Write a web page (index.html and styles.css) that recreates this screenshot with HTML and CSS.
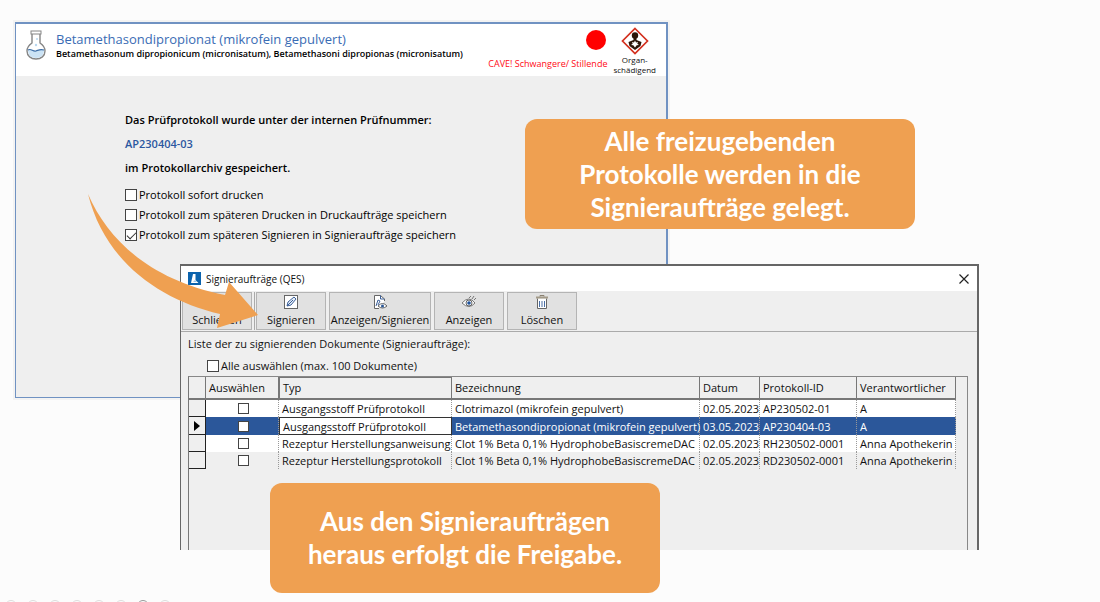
FILE: index.html
```
<!DOCTYPE html>
<html lang="de">
<head>
	<meta charset="utf-8">
	<title>Signieraufträge</title>
	<link rel="stylesheet" href="styles.css">
</head>
<body>
<main class="slide">

  <section class="window protocol">
    <header class="substance">
      <svg class="flask" viewBox="0 0 20 30" width="20" height="30">
        <path d="M6 4v9C3 15 1 18 1 21c0 5 4 8 9 8s9-3 9-8c0-3-2-6-5-8V4" fill="#fff" stroke="#858585" stroke-width="1.4"/>
        <path d="M2 20c3-2 5 2 8 1s4-2 8-1c0 5-3 8-8 8s-8-3-8-8z" fill="#cbe3f5"/>
        <path d="M2 20c3-2 5 2 8 1s4-2 8-1" fill="none" stroke="#3c6ea8" stroke-width="1.2"/>
        <rect x="5" y="1" width="10" height="3" fill="#fff" stroke="#858585"/>
        <circle cx="10" cy="15" r="1.2" fill="#b9d8f0"/>
        <circle cx="11" cy="9" r="1" fill="#b9d8f0"/>
      </svg>
      <div class="names">
        <h1>Betamethasondipropionat (mikrofein gepulvert)</h1>
        <p>Betamethasonum dipropionicum (micronisatum), Betamethasoni dipropionas (micronisatum)</p>
      </div>
      <div class="cave">
        <span class="cave-dot"></span>
        <span>CAVE! Schwangere/ Stillende</span>
      </div>
      <div class="hazard">
        <svg viewBox="0 0 28 28" width="28" height="28">
          <path d="M14 1.5 26.500 14 14 26.500 1.500 14z" fill="#fff" stroke="#d3301f" stroke-width="1.700"/>
          <circle cx="14" cy="8.500" r="3.200" fill="#2b1408"/>
          <path d="M12.500 10h3v3l5 2-1 4-5.500 4-5.500-4-1-4 5-2z" fill="#2b1408"/>
          <path d="M14 13.500l1 2 2-.5-.7 1.800 1.700 1.200-2.300.3L14 20.500l-1.700-2.200-2.300-.3 1.700-1.200L11 15l2 .5z" fill="#fff"/>
        </svg>
        <span>Organ-<br>schädigend</span>
      </div>
    </header>
    <div class="result">
      <p>Das Prüfprotokoll wurde unter der internen Prüfnummer:</p>
      <p class="number">AP230404-03</p>
      <p>im Protokollarchiv gespeichert.</p>
      <div class="options">
        <label><input type="checkbox">Protokoll sofort drucken</label>
        <label><input type="checkbox">Protokoll zum späteren Drucken in Druckaufträge speichern</label>
        <label><input type="checkbox" checked>Protokoll zum späteren Signieren in Signieraufträge speichern</label>
      </div>
    </div>
  </section>

  <section class="window orders">
    <header class="titlebar">
      <svg viewBox="0 0 13 13" width="13" height="13">
        <rect width="13" height="13" fill="#0b63ad"/>
        <path d="M5 2h2.500v6l3 3H3z" fill="#fff"/>
        <path d="M7 8l2 2H5z" fill="#9cc9ea"/>
      </svg>
      <h2>Signieraufträge (QES)</h2>
      <button class="close" aria-label="Fenster schließen">
        <svg viewBox="0 0 10 10" width="10" height="10"><path d="M.5.5l9 9M9.500.5l-9 9" stroke="#222" stroke-width="1.200"/></svg>
      </button>
    </header>
    <div class="toolbar">
      <button class="tool">Schließen</button>
      <span class="divider"></span>
      <button class="tool">
        <svg viewBox="0 0 16 16" width="16" height="16" fill="none">
          <rect x="1.500" y="1.500" width="13" height="13" fill="#fff" stroke="#666"/>
          <path d="M4 12l1-4 6-5 2 2-5 6z" fill="#e6eef8" stroke="#3b5f98"/>
          <path d="M4 12l6-6" stroke="#3b5f98"/>
        </svg>
        Signieren
      </button>
      <button class="tool wide">
        <svg viewBox="0 0 16 16" width="16" height="16" fill="none">
          <path d="M12.500 7V5l-4-3.500h-6v13H7" fill="#fff" stroke="#666"/>
          <path d="M8.500 1.500V5h4M4 12l2-6 2 1-2 4" stroke="#3b5f98"/>
          <path d="M6 12q4.500-5 9 0-4.500 4-9 0z" fill="#fff" stroke="#666"/>
          <circle cx="10.500" cy="12" r="1.500" fill="#2b5797"/>
        </svg>
        Anzeigen/Signieren
      </button>
      <button class="tool">
        <svg viewBox="0 0 16 16" width="16" height="16" fill="none">
          <path d="M1 9q7-8 13 0-6 7-13 0z" fill="#fff" stroke="#777"/>
          <path d="M8 4l2-2M11 5l2-3M13 6l2-2" stroke="#777"/>
          <circle cx="8" cy="9" r="3" stroke="#666"/>
          <circle cx="8" cy="9" r="1.800" fill="#1e529c"/>
        </svg>
        Anzeigen
      </button>
      <button class="tool">
        <svg viewBox="0 0 16 16" width="16" height="16" fill="none">
          <path d="M3.500 4.500v10h9v-10" fill="#fff" stroke="#666"/>
          <path d="M2 3.500h12" stroke="#a39a88" stroke-width="2"/>
          <path d="M6 2.500v-1h4v1" stroke="#8a8070"/>
          <path d="M5.500 7v6M8 7v6M10.500 7v6" stroke="#4a6fa5"/>
        </svg>
        Löschen
      </button>
    </div>
    <div class="list">
      <p>Liste der zu signierenden Dokumente (Signieraufträge):</p>
      <label class="all"><input type="checkbox">Alle auswählen (max. 100 Dokumente)</label>
      <div class="grid">
        <table>
          <colgroup>
            <col class="c-mark"><col class="c-check"><col class="c-type"><col class="c-name"><col class="c-date"><col class="c-id"><col class="c-person">
          </colgroup>
          <thead>
            <tr><th></th><th>Auswählen</th><th class="sorted">Typ</th><th>Bezeichnung</th><th>Datum</th><th>Protokoll-ID</th><th>Verantwortlicher</th></tr>
          </thead>
          <tbody>
            <tr>
              <td></td><td><input type="checkbox" aria-label="AP230502-01 auswählen"></td>
              <td>Ausgangsstoff Prüfprotokoll</td><td>Clotrimazol (mikrofein gepulvert)</td><td>02.05.2023</td><td>AP230502-01</td><td>A</td>
            </tr>
            <tr class="selected">
              <td><svg viewBox="0 0 6 10" width="6" height="10"><path d="M0 0l6 5-6 5z" fill="#000"/></svg></td><td><input type="checkbox" aria-label="AP230404-03 auswählen"></td>
              <td class="focus">Ausgangsstoff Prüfprotokoll</td><td>Betamethasondipropionat (mikrofein gepulvert)</td><td>03.05.2023</td><td>AP230404-03</td><td>A</td>
            </tr>
            <tr>
              <td></td><td><input type="checkbox" aria-label="RH230502-0001 auswählen"></td>
              <td>Rezeptur Herstellungsanweisung</td><td>Clot 1% Beta 0,1% HydrophobeBasiscremeDAC</td><td>02.05.2023</td><td>RH230502-0001</td><td>Anna Apothekerin</td>
            </tr>
            <tr class="odd">
              <td></td><td><input type="checkbox" aria-label="RD230502-0001 auswählen"></td>
              <td>Rezeptur Herstellungsprotokoll</td><td>Clot 1% Beta 0,1% HydrophobeBasiscremeDAC</td><td>02.05.2023</td><td>RD230502-0001</td><td>Anna Apothekerin</td>
            </tr>
          </tbody>
        </table>
      </div>
    </div>
  </section>

  <svg class="arrow" viewBox="0 0 172 136" width="172" height="136">
    <path d="M1 1C21 47 63 87 138 102L142 89 171 122 130 135 133 121C73 107 18 69 1 1z" fill="#efa051"/>
  </svg>

  <p class="callout callout-top">Alle freizugebenden<br>Protokolle werden in die<br>Signieraufträge gelegt.</p>
  <p class="callout callout-bottom">Aus den Signieraufträgen<br>heraus erfolgt die Freigabe.</p>

  <div class="dots">
    <span></span><span></span><span></span><span></span><span></span><span></span><span class="current"></span><span></span>
  </div>
</main>
</body>
</html>
```

FILE: styles.css
```
* {
    box-sizing: border-box;
}

body {
    margin: 0;
    background: #fcfcfc;
    color: #111;
    font: 11px/16px "Open Sans", "Noto Sans", sans-serif;
}

h1, h2, p {
    margin: 0;
    font-size: inherit;
    font-weight: inherit;
}

button {
    font: inherit;
    color: inherit;
}

svg {
    display: block;
    flex: none;
}

input[type="checkbox"] {
    appearance: none;
    flex: none;
    width: 12px;
    height: 12px;
    margin: 0;
    background: #fff;
    border: 1px solid #444;
}

input[type="checkbox"]:checked::before {
    content: "";
    display: block;
    width: 8px;
    height: 4px;
    margin: 2px 1px;
    border: solid #333;
    border-width: 0 0 1px 1px;
    transform: rotate(-45deg);
}

label {
    display: flex;
    align-items: center;
    gap: 2px;
}

.slide {
    position: relative;
    min-height: 100vh;
    overflow: hidden;
}

.window {
    position: absolute;
    background: #efefef;
}

/* protocol window */
.protocol {
    left: 15px;
    top: 22px;
    width: 653px;
    min-height: 376px;
    border: 2px solid #7092c2;
    border-width: 2px 2px 1px 1px;
    box-shadow: 0 0 0 2px #f3f3f3;
}

.substance {
    display: flex;
    align-items: flex-start;
    height: 52px;
    padding: 6px 10px 0;
    background: #fff;
}

.names {
    flex: 1;
    padding: 1px 0 0 10px;
    white-space: nowrap;
}

.names h1 {
    color: #3a6cb4;
    font-size: 13px;
}

.names p {
    color: #000;
    font-size: 9px;
    font-weight: 600;
    line-height: 13px;
}

.cave {
    display: flex;
    flex-direction: column;
    align-items: flex-end;
    gap: 6px;
    color: #ff0a14;
    font-size: 9px;
    white-space: nowrap;
}

.cave-dot {
    width: 20px;
    height: 20px;
    margin-right: 1px;
    border-radius: 50%;
    background: #f00;
}

.hazard {
    display: flex;
    flex-direction: column;
    align-items: center;
    margin: -3px 0 0 6px;
    font-size: 8px;
    line-height: 10px;
    text-align: center;
}

.result {
    padding: 36px 0 0 109px;
    font-weight: 600;
    color: #000;
}

.result p {
    margin-bottom: 8px;
}

.result .number {
    color: #2b57a0;
}

.options {
    display: flex;
    flex-direction: column;
    gap: 4px;
    padding-top: 3px;
    font-weight: normal;
}

/* signing orders window */
.orders {
    left: 180px;
    top: 264px;
    width: 799px;
    min-height: 286px;
    display: flex;
    flex-direction: column;
    border: 2px solid #666;
    border-width: 2px 2px 0 1px;
}

.titlebar {
    display: flex;
    align-items: center;
    gap: 5px;
    height: 25px;
    padding: 0 7px;
    background: #fff;
}

.titlebar h2 {
    flex: 1;
    font-size: 10px;
}

.close {
    padding: 1px;
    border: 0;
    background: none;
}

.toolbar {
    display: flex;
    gap: 3px;
    padding: 1px;
    border-bottom: 1px solid #aaa;
}

.tool {
    display: flex;
    flex-direction: column;
    align-items: center;
    justify-content: flex-end;
    gap: 2px;
    width: 70px;
    height: 38px;
    padding: 0 0 1px;
    border: 1px solid #b4b4b4;
    background: #e1e1e1;
    white-space: nowrap;
}

.tool.wide {
    width: 102px;
}

.divider {
    width: 1px;
    margin: 0 -2px 0 -1px;
    background: #aaa;
}

.list {
    flex: 1;
    display: flex;
    flex-direction: column;
    padding: 4px 9px 0 7px;
}

.all {
    padding: 6px 0 2px 19px;
}

.grid {
    flex: 1;
    border: 2px solid #888;
    border-width: 1px 1px 0;
    border-left: 1px solid #777;
}

table {
    width: 767px;
    border-collapse: separate;
    border-spacing: 0;
    table-layout: fixed;
    white-space: nowrap;
}

.c-mark { width: 17px; }
.c-check { width: 73px; }
.c-type { width: 173px; }
.c-name { width: 248px; }
.c-date { width: 60px; }
.c-id { width: 97px; }
.c-person { width: 99px; }

th {
    height: 23px;
    padding: 0 3px;
    border-right: 1px solid #777;
    border-bottom: 2px solid #777;
    font-weight: normal;
    text-align: left;
}

th.sorted {
    border-top: 1px solid #777;
    border-left: 1px solid #777;
}

td {
    height: 17px;
    padding: 0 0 0 3px;
    line-height: 15px;
    background: #fff;
    border-right: 1px dotted #999;
}

td:first-child {
    padding: 0 0 0 5px;
    background: #efefef;
    border-right: 1px solid #222;
    border-bottom: 1px solid #222;
}

td input[type="checkbox"] {
    display: block;
    width: 11px;
    height: 11px;
    margin: 0 auto;
}

.odd td {
    background: #efefef;
}

.selected td:not(:first-child) {
    background: #2b579a;
    color: #fff;
    height: 18px;
}

.selected td.focus {
    background: #fff;
    color: #111;
    border: 1px solid #333;
}

/* annotations lying over the windows */
.arrow {
    position: absolute;
    left: 87px;
    top: 193px;
}

.callout {
    position: absolute;
    display: flex;
    align-items: center;
    justify-content: center;
    width: 390px;
    height: 110px;
    border-radius: 12px;
    background: #efa051;
    color: #fff;
    font: bold 26px/33px Lato, "Open Sans", sans-serif;
    text-align: center;
}

.callout-top {
    left: 525px;
    top: 119px;
}

.callout-bottom {
    left: 270px;
    top: 483px;
}

.dots {
    position: absolute;
    left: 5px;
    bottom: -10px;
    display: flex;
    gap: 10px;
}

.dots span {
    width: 12px;
    height: 12px;
    border: 1px solid #ddd;
    border-radius: 50%;
}

.dots .current {
    border-color: #999;
}
```
